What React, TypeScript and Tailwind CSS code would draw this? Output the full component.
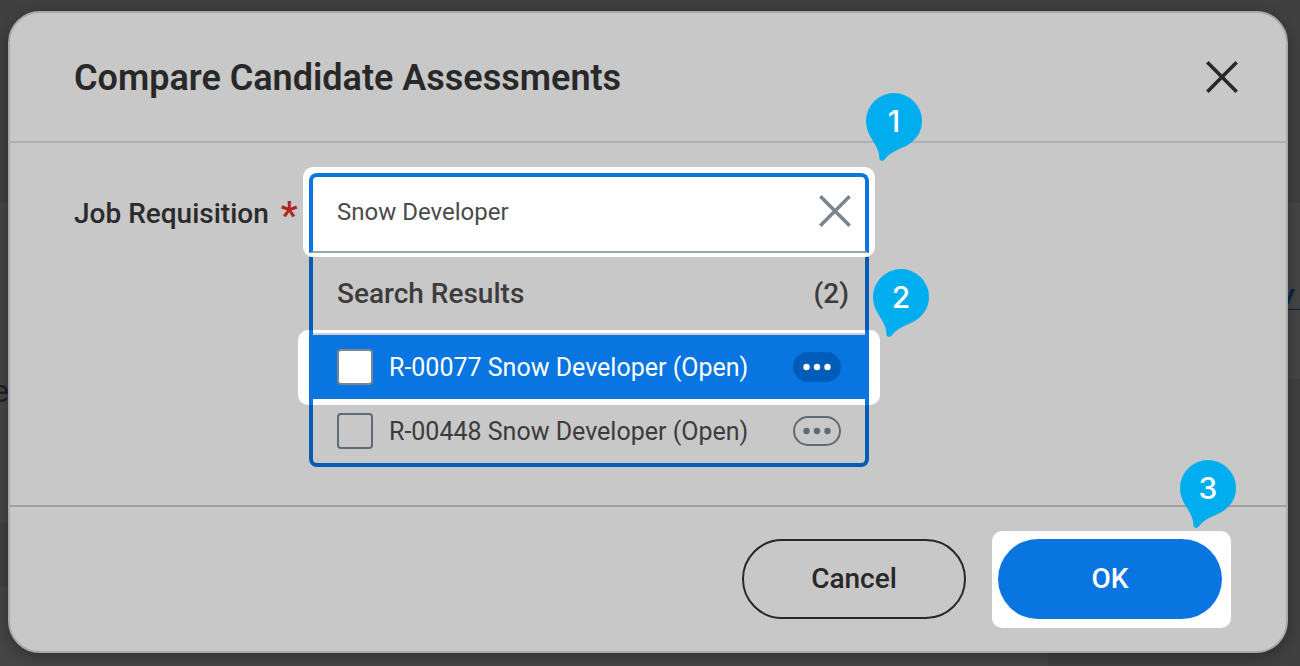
import React, { useState } from "react";

const requisitions = [
  { id: "R-00077", label: "R-00077 Snow Developer (Open)", active: true },
  { id: "R-00448", label: "R-00448 Snow Developer (Open)", active: false },
];

const CloseIcon = ({ className }: { className: string }) => (
  <svg viewBox="0 0 32 32" className={className} fill="none" aria-hidden="true">
    <path
      d="M2.600 2.600L29.400 29.400M29.400 2.600L2.600 29.400"
      stroke="currentColor"
      strokeWidth="3.6"
      strokeLinecap="square"
    />
  </svg>
);

const StepPin = ({ step, className }: { step: number; className: string }) => (
  <div className={`absolute z-20 h-[68px] w-14 ${className}`}>
    <svg viewBox="0 0 56 68" className="absolute inset-0" aria-hidden="true">
      <path
        fill="#00aeef"
        d="M28 0A28 28 0 0 1 56 28C56 38 51 45.500 44 50.500C36 56 26 57.500 19.500 65.500C18 68.600 13.500 68.700 13.300 65C13.500 60 11.500 55.500 8.500 50.500C5 44.500 0 38 0 28A28 28 0 0 1 28 0Z"
      />
    </svg>
    <span className="relative block text-center font-[Inter,sans-serif] text-[30px] leading-[56px] font-medium text-white">
      {step}
    </span>
  </div>
);

const MoreButton = ({ active }: { active: boolean }) => (
  <button
    type="button"
    aria-label="Related actions"
    className={`flex h-[30px] w-12 shrink-0 items-center justify-center rounded-full ${
      active ? "bg-[#005cb9] text-white" : "border-2 border-[#606a74] text-[#606a74]"
    }`}>
    <svg viewBox="0 0 28 8" className="h-2 w-7" fill="currentColor" aria-hidden="true">
      <circle cx="3.500" cy="4" r="3.200" />
      <circle cx="14" cy="4" r="3.200" />
      <circle cx="24.500" cy="4" r="3.200" />
    </svg>
  </button>
);

const ResultRow = ({ id, label, active }: { id: string; label: string; active: boolean }) => (
  <>
    <input
      id={id}
      type="checkbox"
      className={`size-9 shrink-0 appearance-none rounded border-2 ${
        active ? "border-[#7b858f] bg-white" : "border-[#606a74]"
      }`}
    />
    <label
      htmlFor={id}
      className={`flex-1 pt-0.5 text-[25px] whitespace-nowrap ${
        active ? "text-white" : "text-[#3c3c3c]"
      }`}>
      {label}
    </label>
    <MoreButton active={active} />
  </>
);

// Page that stays dimmed behind the dialog
const Backdrop = () => (
  <div className="absolute inset-0 flex flex-col bg-[#404040]" aria-hidden="true">
    <div className="h-[203px] shrink-0" />
    <div className="flex h-44 shrink-0 justify-between">
      <div className="w-1/2 bg-[#454545]" />
      <div className="flex w-1/2 items-center justify-end bg-[#454545]">
        <span className="mt-2 border-b border-[#03254d] pr-1.5 text-[28px] leading-7 font-bold text-[#03254d] italic">
          w
        </span>
      </div>
    </div>
    <div className="flex h-36 shrink-0">
      <div className="w-1/2 bg-[#454545] text-[32px] leading-6 text-[#1d2125]">
        <span className="-ml-2">e</span>
      </div>
    </div>
    <div className="h-16 shrink-0" />
    <div className="mr-[252px] flex-1 bg-[#454545]" />
  </div>
);

const App = () => {
  const [query, setQuery] = useState("Snow Developer");

  return (
    <main className="relative min-h-screen overflow-hidden pt-[11px] pr-3 pb-[13px] pl-2 font-[Roboto,sans-serif]">
      <Backdrop />

      <section
        role="dialog"
        aria-labelledby="dialog-title"
        className="relative rounded-[32px] border-2 border-[#a3aab0] bg-[#c8c8c8] shadow-[0_4px_16px_rgba(0,0,0,0.3)]">
        {/* Header */}
        <header className="flex h-[130px] items-center justify-between border-b-2 border-[#abb1b5] pr-10 pl-16">
          <h1 id="dialog-title" className="pt-0.5 text-[36px] font-semibold text-[#282828]">
            Compare Candidate Assessments
          </h1>
          <button
            type="button"
            aria-label="Close"
            className="flex size-12 items-center justify-center text-[#282828]">
            <CloseIcon className="size-8" />
          </button>
        </header>

        {/* Job requisition prompt */}
        <div className="flex items-start pt-[30px] pr-16 pb-[38px] pl-16">
          <label
            htmlFor="requisition"
            className="flex h-[82px] w-[235px] shrink-0 items-center gap-3 text-[28px] font-medium text-[#2b2b2b]">
            Job Requisition
            <span className="pt-1 text-[38px] leading-9 text-[#b3241c]">*</span>
          </label>

          <div className="relative isolate w-[560px]">
            <div className="relative pb-1">
              <div className="absolute -inset-x-1.5 -top-1.5 bottom-0 -z-10 rounded-[10px] bg-white" />
              <div className="flex h-20 items-center rounded-t-lg border-4 border-b-2 border-[#0875e1] border-b-[#9aa5b0] bg-white pr-3.5 pl-6">
                <input
                  id="requisition"
                  type="text"
                  value={query}
                  onChange={(e) => setQuery(e.target.value)}
                  className="h-full min-w-0 flex-1 pb-1 text-2xl text-[#4a4a4a] outline-none"
                />
                <button
                  type="button"
                  aria-label="Clear"
                  onClick={() => setQuery("")}
                  className="pb-1.5 text-[#7b858f]">
                  <CloseIcon className="size-8" />
                </button>
              </div>
              <StepPin step={1} className="-top-20 -right-[53px]" />
            </div>

            <div className="relative flex h-[73px] items-center justify-between border-x-4 border-[#065cb3] pr-4 pl-6 text-[28px] font-medium text-[#3c3c3c]">
              <h2>Search Results</h2>
              <span>(2)</span>
              <StepPin step={2} className="top-3 -right-16" />
            </div>

            {requisitions.map((item) =>
              item.active ? (
                <div key={item.id} className="relative border-x-4 border-[#0875e1] pt-[5px] pb-1.5">
                  <div className="absolute inset-y-0 -inset-x-[15px] -z-10 rounded-[10px] bg-white" />
                  <div className="flex h-16 items-center gap-4 bg-[#0875e1] px-6 shadow-[0_-2px_0_#ccd0d4]">
                    <ResultRow {...item} />
                  </div>
                </div>
              ) : (
                <div
                  key={item.id}
                  className="flex h-[62px] items-center gap-4 rounded-b-lg border-4 border-t-0 border-[#065cb3] px-6 pb-1.5">
                  <ResultRow {...item} />
                </div>
              )
            )}
          </div>
        </div>

        {/* Footer */}
        <footer className="flex justify-end gap-8 border-t-2 border-[#9f9f9f] px-16 py-8">
          <button
            type="button"
            className="h-20 w-56 rounded-full border-2 border-[#282828] text-[28px] font-medium text-[#282828]">
            Cancel
          </button>
          <div className="relative isolate">
            <div className="absolute -top-2 -right-[9px] -bottom-[9px] -left-1.5 -z-10 rounded-[10px] bg-white" />
            <button
              type="button"
              className="h-20 w-56 rounded-full bg-[#0875e1] text-[28px] font-medium text-white">
              OK
            </button>
            <StepPin step={3} className="-top-[79px] -right-3.5" />
          </div>
        </footer>
      </section>
    </main>
  );
};

export default App;
